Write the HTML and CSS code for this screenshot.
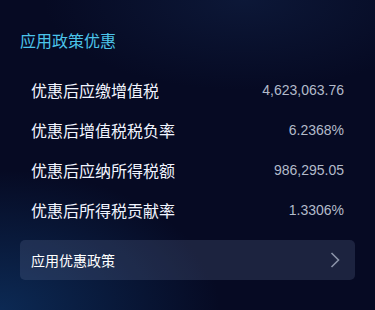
FILE: index.html
```html
<!DOCTYPE html>
<html lang="zh-CN">
<head>
    <meta charset="UTF-8">
    <meta name="viewport" content="width=device-width, initial-scale=1.0">
    <title>应用政策优惠</title>
    <link rel="stylesheet" href="styles.css">
</head>
<body>
    <div class="panel">
        <h2 class="panel-title">应用政策优惠</h2>
        <div class="stat-list">
            <div class="stat-row">
                <span class="stat-label">优惠后应缴增值税</span>
                <span class="stat-value">4,623,063.76</span>
            </div>
            <div class="stat-row">
                <span class="stat-label">优惠后增值税税负率</span>
                <span class="stat-value">6.2368%</span>
            </div>
            <div class="stat-row">
                <span class="stat-label">优惠后应纳所得税额</span>
                <span class="stat-value">986,295.05</span>
            </div>
            <div class="stat-row">
                <span class="stat-label">优惠后所得税贡献率</span>
                <span class="stat-value">1.3306%</span>
            </div>
        </div>
        <a href="#" class="policy-btn">
            <span>应用优惠政策</span>
            <svg class="chevron" width="10" height="16" viewBox="0 0 10 16">
                <path d="M1.5 1 L8.5 8 L1.5 15" fill="none" stroke="#8a93a8" stroke-width="1.6"/>
            </svg>
        </a>
    </div>
</body>
</html>
```

FILE: styles.css
```css
html, body {
    height: 100%;
}
body {
    margin: 0;
    font-family: 'Liberation Sans', 'Noto Sans CJK SC', sans-serif;
    background-color: #060a23;
    background-image:
        radial-gradient(ellipse 220px 140px at 0% 100%, rgba(14, 52, 100, 0.75), rgba(14, 52, 100, 0) 100%),
        radial-gradient(ellipse 200px 90px at 65% 0%, rgba(20, 40, 80, 0.45), rgba(20, 40, 80, 0) 100%);
    overflow: hidden;
}
.panel {
    padding: 31px 20px 0;
}
.panel-title {
    margin: 0 0 17px;
    font-size: 16px;
    line-height: 22px;
    font-weight: normal;
    color: #4cc4ea;
}
.stat-row {
    display: flex;
    justify-content: space-between;
    align-items: center;
    height: 40px;
    padding: 0 11px;
}
.stat-label {
    font-size: 16px;
    color: #f2f5ff;
}
.stat-value {
    font-size: 14px;
    color: #b3bbca;
}
.policy-btn {
    display: flex;
    justify-content: space-between;
    align-items: center;
    height: 40px;
    margin-top: 10px;
    padding: 0 15px 0 11px;
    border-radius: 5px;
    background: rgba(120, 135, 175, 0.2);
    color: #fff;
    font-size: 14px;
    text-decoration: none;
}
```
